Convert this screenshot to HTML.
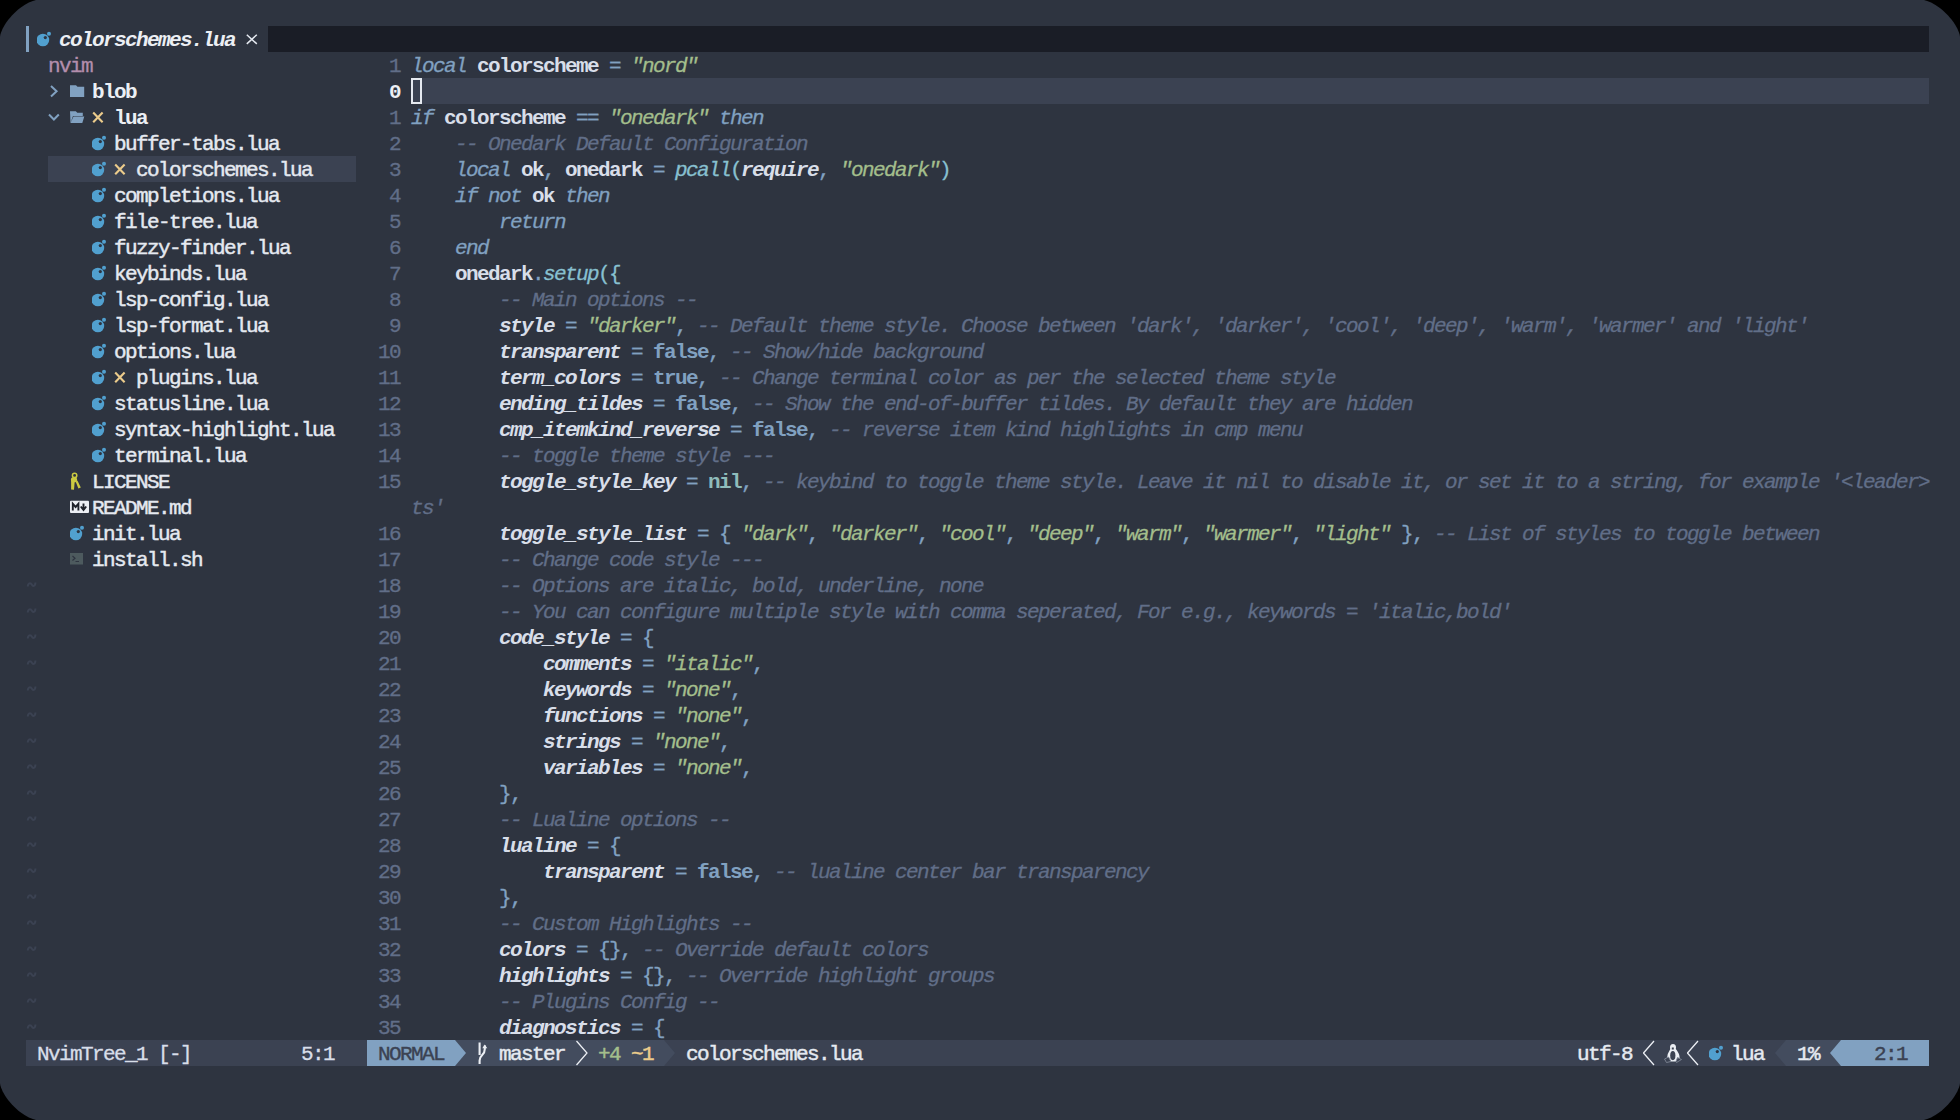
<!DOCTYPE html>
<html><head><meta charset="utf-8"><style>
html,body{margin:0;padding:0;background:#000;}
body{width:1960px;height:1120px;overflow:hidden;position:relative;}
.win{position:absolute;left:0;top:0;width:1960px;height:1120px;background:#2E3440;clip-path:polygon(1923.00px 0.00px,1923.97px 0.11px,1925.45px 0.42px,1927.19px 0.94px,1929.10px 1.67px,1931.15px 2.59px,1933.28px 3.71px,1935.47px 5.00px,1937.68px 6.46px,1939.90px 8.07px,1942.09px 9.83px,1944.23px 11.70px,1946.31px 13.69px,1948.30px 15.77px,1950.17px 17.91px,1951.93px 20.10px,1953.54px 22.32px,1955.00px 24.53px,1956.29px 26.72px,1957.41px 28.85px,1958.33px 30.90px,1959.06px 32.81px,1959.58px 34.55px,1959.89px 36.03px,1960.00px 37.00px,1960.00px 1083.00px,1959.89px 1083.97px,1959.58px 1085.45px,1959.06px 1087.19px,1958.33px 1089.10px,1957.41px 1091.15px,1956.29px 1093.28px,1955.00px 1095.47px,1953.54px 1097.68px,1951.93px 1099.90px,1950.17px 1102.09px,1948.30px 1104.23px,1946.31px 1106.31px,1944.23px 1108.30px,1942.09px 1110.17px,1939.90px 1111.93px,1937.68px 1113.54px,1935.47px 1115.00px,1933.28px 1116.29px,1931.15px 1117.41px,1929.10px 1118.33px,1927.19px 1119.06px,1925.45px 1119.58px,1923.97px 1119.89px,1923.00px 1120.00px,37.00px 1120.00px,36.03px 1119.89px,34.55px 1119.58px,32.81px 1119.06px,30.90px 1118.33px,28.85px 1117.41px,26.72px 1116.29px,24.53px 1115.00px,22.32px 1113.54px,20.10px 1111.93px,17.91px 1110.17px,15.77px 1108.30px,13.69px 1106.31px,11.70px 1104.23px,9.83px 1102.09px,8.07px 1099.90px,6.46px 1097.68px,5.00px 1095.47px,3.71px 1093.28px,2.59px 1091.15px,1.67px 1089.10px,0.94px 1087.19px,0.42px 1085.45px,0.11px 1083.97px,0.00px 1083.00px,0.00px 37.00px,0.11px 36.03px,0.42px 34.55px,0.94px 32.81px,1.67px 30.90px,2.59px 28.85px,3.71px 26.72px,5.00px 24.53px,6.46px 22.32px,8.07px 20.10px,9.83px 17.91px,11.70px 15.77px,13.69px 13.69px,15.77px 11.70px,17.91px 9.83px,20.10px 8.07px,22.32px 6.46px,24.53px 5.00px,26.72px 3.71px,28.85px 2.59px,30.90px 1.67px,32.81px 0.94px,34.55px 0.42px,36.03px 0.11px,37.00px 0.00px);overflow:hidden;}
.t{position:absolute;white-space:pre;font-family:"Liberation Mono",monospace;font-size:21px;letter-spacing:-1.6021px;line-height:26px;height:26px;color:#D8DEE9;}
.st{-webkit-text-stroke:0.3px currentColor}
.b{font-weight:bold}
.bi{font-weight:bold;font-style:italic}
.fg6{color:#ECEFF4}
.fn6{color:#E5E9F0;-webkit-text-stroke:0.45px #E5E9F0}
.purple{color:#B48EAD;-webkit-text-stroke:0.3px currentColor}
.tilde{color:#3B4252}
.kw{color:#81A1C1;font-style:italic;-webkit-text-stroke:0.3px currentColor}
.id{color:#D8DEE9;font-weight:bold}
.op{color:#81A1C1;-webkit-text-stroke:0.3px currentColor}
.str{color:#A3BE8C;font-style:italic;-webkit-text-stroke:0.3px currentColor}
.cmt{color:#616E88;font-style:italic;-webkit-text-stroke:0.3px currentColor}
.fn{color:#88C0D0;font-style:italic;-webkit-text-stroke:0.3px currentColor}
.req{color:#D8DEE9;font-weight:bold;font-style:italic}
.prop{color:#D8DEE9;font-weight:bold;font-style:italic}
.bool{color:#81A1C1;font-weight:bold}
.nil{color:#8FBCBB;font-weight:bold}
.pun{color:#81A1C1;-webkit-text-stroke:0.3px currentColor}
.par{color:#88C0D0;-webkit-text-stroke:0.3px currentColor}
.brc{color:#81A1C1;-webkit-text-stroke:0.3px currentColor}
.lnr{color:#616E88;-webkit-text-stroke:0.3px currentColor}
.lnrc{color:#ECEFF4;font-weight:bold}
.sl{color:#D8DEE9;-webkit-text-stroke:0.3px currentColor}
.slb{color:#E5E9F0;-webkit-text-stroke:0.45px #E5E9F0}
.slm{color:#3B4252;-webkit-text-stroke:0.4px #3B4252}
.add{color:#A3BE8C;-webkit-text-stroke:0.45px #A3BE8C}
.chg{color:#EBCB8B;-webkit-text-stroke:0.45px #EBCB8B}
</style></head>
<body><div class="win">
<div style="position:absolute;left:268px;top:26px;width:1661px;height:26px;background:#1A1D26;"></div>
<div style="position:absolute;left:26px;top:26px;width:3px;height:26px;background:#81A1C1;"></div>
<div style="position:absolute;left:411px;top:78px;width:1518px;height:26px;background:#3B4252;"></div>
<div style="position:absolute;left:48px;top:156px;width:308px;height:26px;background:#3B4252;"></div>
<div style="position:absolute;left:26px;top:1040px;width:341px;height:26px;background:#3B4252;"></div>
<div style="position:absolute;left:367px;top:1040px;width:1562px;height:26px;background:#3B4252;"></div>
<div style="position:absolute;left:367px;top:1040px;width:88px;height:26px;background:#81A1C1;"></div>
<svg style="position:absolute;left:455px;top:1040px;" width="11" height="26" viewBox="0 0 11 26"><polygon points="0,0 11,13 0,26" fill="#81A1C1"/></svg>
<div style="position:absolute;left:455px;top:1040px;width:209px;height:26px;background:#434C5E;"></div>
<svg style="position:absolute;left:455px;top:1040px;z-index:2" width="11" height="26" viewBox="0 0 11 26"><polygon points="0,0 11,13 0,26" fill="#81A1C1"/></svg>
<div style="position:absolute;left:455px;top:1040px;width:0px;height:0px;background:none;"></div>
<svg style="position:absolute;left:664px;top:1040px;" width="11" height="26" viewBox="0 0 11 26"><polygon points="0,0 11,13 0,26" fill="#434C5E"/></svg>
<svg style="position:absolute;left:1775px;top:1040px;" width="11" height="26" viewBox="0 0 11 26"><polygon points="11,0 0,13 11,26" fill="#434C5E"/></svg>
<div style="position:absolute;left:1786px;top:1040px;width:55px;height:26px;background:#434C5E;"></div>
<svg style="position:absolute;left:1830px;top:1040px;" width="11" height="26" viewBox="0 0 11 26"><polygon points="11,0 0,13 11,26" fill="#81A1C1"/></svg>
<div style="position:absolute;left:1841px;top:1040px;width:88px;height:26px;background:#81A1C1;"></div>
<svg style="position:absolute;left:37px;top:26px;" width="14" height="26" viewBox="0 0 14 26"><circle cx="5.9" cy="14" r="6.3" fill="#51A0CF"/><circle cx="8.3" cy="11.6" r="1.6" fill="#2E3440"/><circle cx="12" cy="7.8" r="2" fill="#51A0CF"/></svg>
<svg style="position:absolute;left:246px;top:26px;" width="12" height="26" viewBox="0 0 12 26"><path d="M0.8 8.7 L10.8 17.9 M10.8 8.7 L0.8 17.9" stroke="#E5E9F0" stroke-width="1.5" fill="none"/></svg>
<svg style="position:absolute;left:48px;top:78px;" width="11" height="26" viewBox="0 0 11 26"><path d="M3 8 L8.6 13.2 L3 18.4" stroke="#81A1C1" stroke-width="2" fill="none"/></svg>
<svg style="position:absolute;left:70px;top:78px;" width="16" height="26" viewBox="0 0 16 26"><path d="M0 7.2 H6 L7.5 8.8 H14.2 V19 H0 Z" fill="#81A1C1"/></svg>
<svg style="position:absolute;left:48px;top:104px;" width="12" height="26" viewBox="0 0 12 26"><path d="M1 10.5 L5.9 15.5 L10.8 10.5" stroke="#81A1C1" stroke-width="2" fill="none"/></svg>
<svg style="position:absolute;left:70px;top:104px;" width="16" height="26" viewBox="0 0 16 26"><path d="M0 7.3 H5.8 L7.3 8.8 H12.8 V12 H3 L0.5 19 Z M3.5 12.6 H14.3 L12.3 19.1 H0.5 Z" fill="#81A1C1"/></svg>
<svg style="position:absolute;left:92px;top:104px;" width="12" height="26" viewBox="0 0 12 26"><path d="M1.2 8.4 L10.6 18.2 M10.6 8.4 L1.2 18.2" stroke="#EBCB8B" stroke-width="2.1" fill="none"/></svg>
<svg style="position:absolute;left:92px;top:130px;" width="14" height="26" viewBox="0 0 14 26"><circle cx="5.9" cy="14" r="6.3" fill="#51A0CF"/><circle cx="8.3" cy="11.6" r="1.6" fill="#2E3440"/><circle cx="12" cy="7.8" r="2" fill="#51A0CF"/></svg>
<svg style="position:absolute;left:92px;top:156px;" width="14" height="26" viewBox="0 0 14 26"><circle cx="5.9" cy="14" r="6.3" fill="#51A0CF"/><circle cx="8.3" cy="11.6" r="1.6" fill="#2E3440"/><circle cx="12" cy="7.8" r="2" fill="#51A0CF"/></svg>
<svg style="position:absolute;left:92px;top:182px;" width="14" height="26" viewBox="0 0 14 26"><circle cx="5.9" cy="14" r="6.3" fill="#51A0CF"/><circle cx="8.3" cy="11.6" r="1.6" fill="#2E3440"/><circle cx="12" cy="7.8" r="2" fill="#51A0CF"/></svg>
<svg style="position:absolute;left:92px;top:208px;" width="14" height="26" viewBox="0 0 14 26"><circle cx="5.9" cy="14" r="6.3" fill="#51A0CF"/><circle cx="8.3" cy="11.6" r="1.6" fill="#2E3440"/><circle cx="12" cy="7.8" r="2" fill="#51A0CF"/></svg>
<svg style="position:absolute;left:92px;top:234px;" width="14" height="26" viewBox="0 0 14 26"><circle cx="5.9" cy="14" r="6.3" fill="#51A0CF"/><circle cx="8.3" cy="11.6" r="1.6" fill="#2E3440"/><circle cx="12" cy="7.8" r="2" fill="#51A0CF"/></svg>
<svg style="position:absolute;left:92px;top:260px;" width="14" height="26" viewBox="0 0 14 26"><circle cx="5.9" cy="14" r="6.3" fill="#51A0CF"/><circle cx="8.3" cy="11.6" r="1.6" fill="#2E3440"/><circle cx="12" cy="7.8" r="2" fill="#51A0CF"/></svg>
<svg style="position:absolute;left:92px;top:286px;" width="14" height="26" viewBox="0 0 14 26"><circle cx="5.9" cy="14" r="6.3" fill="#51A0CF"/><circle cx="8.3" cy="11.6" r="1.6" fill="#2E3440"/><circle cx="12" cy="7.8" r="2" fill="#51A0CF"/></svg>
<svg style="position:absolute;left:92px;top:312px;" width="14" height="26" viewBox="0 0 14 26"><circle cx="5.9" cy="14" r="6.3" fill="#51A0CF"/><circle cx="8.3" cy="11.6" r="1.6" fill="#2E3440"/><circle cx="12" cy="7.8" r="2" fill="#51A0CF"/></svg>
<svg style="position:absolute;left:92px;top:338px;" width="14" height="26" viewBox="0 0 14 26"><circle cx="5.9" cy="14" r="6.3" fill="#51A0CF"/><circle cx="8.3" cy="11.6" r="1.6" fill="#2E3440"/><circle cx="12" cy="7.8" r="2" fill="#51A0CF"/></svg>
<svg style="position:absolute;left:92px;top:364px;" width="14" height="26" viewBox="0 0 14 26"><circle cx="5.9" cy="14" r="6.3" fill="#51A0CF"/><circle cx="8.3" cy="11.6" r="1.6" fill="#2E3440"/><circle cx="12" cy="7.8" r="2" fill="#51A0CF"/></svg>
<svg style="position:absolute;left:92px;top:390px;" width="14" height="26" viewBox="0 0 14 26"><circle cx="5.9" cy="14" r="6.3" fill="#51A0CF"/><circle cx="8.3" cy="11.6" r="1.6" fill="#2E3440"/><circle cx="12" cy="7.8" r="2" fill="#51A0CF"/></svg>
<svg style="position:absolute;left:92px;top:416px;" width="14" height="26" viewBox="0 0 14 26"><circle cx="5.9" cy="14" r="6.3" fill="#51A0CF"/><circle cx="8.3" cy="11.6" r="1.6" fill="#2E3440"/><circle cx="12" cy="7.8" r="2" fill="#51A0CF"/></svg>
<svg style="position:absolute;left:92px;top:442px;" width="14" height="26" viewBox="0 0 14 26"><circle cx="5.9" cy="14" r="6.3" fill="#51A0CF"/><circle cx="8.3" cy="11.6" r="1.6" fill="#2E3440"/><circle cx="12" cy="7.8" r="2" fill="#51A0CF"/></svg>
<svg style="position:absolute;left:114px;top:156px;" width="12" height="26" viewBox="0 0 12 26"><path d="M1.2 8.4 L10.6 18.2 M10.6 8.4 L1.2 18.2" stroke="#EBCB8B" stroke-width="2.1" fill="none"/></svg>
<svg style="position:absolute;left:114px;top:364px;" width="12" height="26" viewBox="0 0 12 26"><path d="M1.2 8.4 L10.6 18.2 M10.6 8.4 L1.2 18.2" stroke="#EBCB8B" stroke-width="2.1" fill="none"/></svg>
<svg style="position:absolute;left:70px;top:468px;" width="12" height="26" viewBox="0 0 12 26"><g fill="#CBCB41"><circle cx="4.6" cy="7.4" r="2.2" fill="none" stroke="#CBCB41" stroke-width="1.5"/><ellipse cx="4" cy="11.7" rx="3.1" ry="2.6"/><path d="M1.1 12.5 V21.4 L4 21.8 L4.7 13.5 Z"/><path d="M5.6 13.6 L8.4 20.6 L10.8 19.5 L7.4 12.4 Z"/></g></svg>
<svg style="position:absolute;left:70px;top:494px;" width="22" height="26" viewBox="0 0 22 26"><rect x="0" y="6.8" width="19" height="12.2" rx="1" fill="#ECEFF4"/><path d="M2.8 16.5 V9.8 L5.6 13 L8.4 9.8 V16.5" stroke="#1E222A" stroke-width="1.9" fill="none"/><path d="M13.5 9.5 V15 M10.8 12.5 L13.5 16 L16.2 12.5" stroke="#1E222A" stroke-width="1.9" fill="none"/></svg>
<svg style="position:absolute;left:70px;top:520px;" width="14" height="26" viewBox="0 0 14 26"><circle cx="5.9" cy="14" r="6.3" fill="#51A0CF"/><circle cx="8.3" cy="11.6" r="1.6" fill="#2E3440"/><circle cx="12" cy="7.8" r="2" fill="#51A0CF"/></svg>
<svg style="position:absolute;left:70px;top:546px;top:552px" width="14" height="26" viewBox="0 0 14 26"><rect x="0" y="1" width="13" height="11.5" fill="#4D5A5E"/><path d="M2.5 4 L5 6.2 L2.5 8.5 M5.5 9.5 H9" stroke="#2E3440" stroke-width="1.2" fill="none"/></svg>
<svg style="position:absolute;left:477px;top:1040px;" width="12" height="26" viewBox="0 0 12 26"><path d="M2.6 2.5 V15 M2.6 24 V20.5 Q2.6 17.5 5.2 15 Q7.8 12.5 7.8 9 V5.5" stroke="#ECEFF4" stroke-width="2.1" fill="none"/><path d="M5.3 8.2 L7.8 4.6 L10.3 8.2 Z" fill="#ECEFF4"/></svg>
<svg style="position:absolute;left:576px;top:1040px;" width="12" height="26" viewBox="0 0 12 26"><path d="M0.5 1 L11 13 L0.5 25" stroke="#ECEFF4" stroke-width="1.25" fill="none"/></svg>
<svg style="position:absolute;left:1643px;top:1040px;" width="12" height="26" viewBox="0 0 12 26"><path d="M11 1 L0.5 13 L11 25" stroke="#ECEFF4" stroke-width="1.25" fill="none"/></svg>
<svg style="position:absolute;left:1687px;top:1040px;" width="12" height="26" viewBox="0 0 12 26"><path d="M11 1 L0.5 13 L11 25" stroke="#ECEFF4" stroke-width="1.25" fill="none"/></svg>
<svg style="position:absolute;left:1660px;top:1040px;" width="26" height="26" viewBox="0 0 26 26"><ellipse cx="13" cy="7.6" rx="3" ry="3.6" fill="#ECEFF4"/><path d="M10.3 9 Q7 14 7 18.5 L10 21.6 H16 L19.6 18 Q19.6 13.5 15.8 9 Z" fill="#ECEFF4"/><ellipse cx="12.8" cy="15.6" rx="2.6" ry="4.6" fill="#3B4252"/><rect x="11.8" y="7.5" width="2" height="2" fill="#3B4252"/><path d="M4.5 19 L8.5 17 L11 21.5 L6.5 22.5 Z M16 21.5 L17.5 17.5 L21.5 19.5 L16.5 22.5 Z" fill="#3B4252" stroke="#7F8795" stroke-width="0.9"/></svg>
<svg style="position:absolute;left:1709px;top:1040px;" width="14" height="26" viewBox="0 0 14 26"><circle cx="5.9" cy="14" r="6.3" fill="#51A0CF"/><circle cx="8.3" cy="11.6" r="1.6" fill="#2E3440"/><circle cx="12" cy="7.8" r="2" fill="#51A0CF"/></svg>
<span class="t bi fg6" style="left:59px;top:27.5px">colorschemes.lua</span>
<span class="t purple" style="left:48px;top:53.5px">nvim</span>
<span class="t b fg6" style="left:92px;top:79.5px">blob</span>
<span class="t b fg6" style="left:114px;top:105.5px">lua</span>
<span class="t fn6" style="left:114px;top:131.5px">buffer-tabs.lua</span>
<span class="t fn6" style="left:136px;top:157.5px">colorschemes.lua</span>
<span class="t fn6" style="left:114px;top:183.5px">completions.lua</span>
<span class="t fn6" style="left:114px;top:209.5px">file-tree.lua</span>
<span class="t fn6" style="left:114px;top:235.5px">fuzzy-finder.lua</span>
<span class="t fn6" style="left:114px;top:261.5px">keybinds.lua</span>
<span class="t fn6" style="left:114px;top:287.5px">lsp-config.lua</span>
<span class="t fn6" style="left:114px;top:313.5px">lsp-format.lua</span>
<span class="t fn6" style="left:114px;top:339.5px">options.lua</span>
<span class="t fn6" style="left:136px;top:365.5px">plugins.lua</span>
<span class="t fn6" style="left:114px;top:391.5px">statusline.lua</span>
<span class="t fn6" style="left:114px;top:417.5px">syntax-highlight.lua</span>
<span class="t fn6" style="left:114px;top:443.5px">terminal.lua</span>
<span class="t fn6" style="left:92px;top:469.5px">LICENSE</span>
<span class="t fn6" style="left:92px;top:495.5px">README.md</span>
<span class="t fn6" style="left:92px;top:521.5px">init.lua</span>
<span class="t fn6" style="left:92px;top:547.5px">install.sh</span>
<svg style="position:absolute;left:26px;top:572px;" width="11" height="26" viewBox="0 0 11 26"><path d="M1.8 14.6 C1.8 10.6 4.8 10.6 5.8 12.6 C6.8 14.6 9.4 14.6 9.4 10.6" stroke="#3B4252" stroke-width="2" fill="none"/></svg>
<svg style="position:absolute;left:26px;top:598px;" width="11" height="26" viewBox="0 0 11 26"><path d="M1.8 14.6 C1.8 10.6 4.8 10.6 5.8 12.6 C6.8 14.6 9.4 14.6 9.4 10.6" stroke="#3B4252" stroke-width="2" fill="none"/></svg>
<svg style="position:absolute;left:26px;top:624px;" width="11" height="26" viewBox="0 0 11 26"><path d="M1.8 14.6 C1.8 10.6 4.8 10.6 5.8 12.6 C6.8 14.6 9.4 14.6 9.4 10.6" stroke="#3B4252" stroke-width="2" fill="none"/></svg>
<svg style="position:absolute;left:26px;top:650px;" width="11" height="26" viewBox="0 0 11 26"><path d="M1.8 14.6 C1.8 10.6 4.8 10.6 5.8 12.6 C6.8 14.6 9.4 14.6 9.4 10.6" stroke="#3B4252" stroke-width="2" fill="none"/></svg>
<svg style="position:absolute;left:26px;top:676px;" width="11" height="26" viewBox="0 0 11 26"><path d="M1.8 14.6 C1.8 10.6 4.8 10.6 5.8 12.6 C6.8 14.6 9.4 14.6 9.4 10.6" stroke="#3B4252" stroke-width="2" fill="none"/></svg>
<svg style="position:absolute;left:26px;top:702px;" width="11" height="26" viewBox="0 0 11 26"><path d="M1.8 14.6 C1.8 10.6 4.8 10.6 5.8 12.6 C6.8 14.6 9.4 14.6 9.4 10.6" stroke="#3B4252" stroke-width="2" fill="none"/></svg>
<svg style="position:absolute;left:26px;top:728px;" width="11" height="26" viewBox="0 0 11 26"><path d="M1.8 14.6 C1.8 10.6 4.8 10.6 5.8 12.6 C6.8 14.6 9.4 14.6 9.4 10.6" stroke="#3B4252" stroke-width="2" fill="none"/></svg>
<svg style="position:absolute;left:26px;top:754px;" width="11" height="26" viewBox="0 0 11 26"><path d="M1.8 14.6 C1.8 10.6 4.8 10.6 5.8 12.6 C6.8 14.6 9.4 14.6 9.4 10.6" stroke="#3B4252" stroke-width="2" fill="none"/></svg>
<svg style="position:absolute;left:26px;top:780px;" width="11" height="26" viewBox="0 0 11 26"><path d="M1.8 14.6 C1.8 10.6 4.8 10.6 5.8 12.6 C6.8 14.6 9.4 14.6 9.4 10.6" stroke="#3B4252" stroke-width="2" fill="none"/></svg>
<svg style="position:absolute;left:26px;top:806px;" width="11" height="26" viewBox="0 0 11 26"><path d="M1.8 14.6 C1.8 10.6 4.8 10.6 5.8 12.6 C6.8 14.6 9.4 14.6 9.4 10.6" stroke="#3B4252" stroke-width="2" fill="none"/></svg>
<svg style="position:absolute;left:26px;top:832px;" width="11" height="26" viewBox="0 0 11 26"><path d="M1.8 14.6 C1.8 10.6 4.8 10.6 5.8 12.6 C6.8 14.6 9.4 14.6 9.4 10.6" stroke="#3B4252" stroke-width="2" fill="none"/></svg>
<svg style="position:absolute;left:26px;top:858px;" width="11" height="26" viewBox="0 0 11 26"><path d="M1.8 14.6 C1.8 10.6 4.8 10.6 5.8 12.6 C6.8 14.6 9.4 14.6 9.4 10.6" stroke="#3B4252" stroke-width="2" fill="none"/></svg>
<svg style="position:absolute;left:26px;top:884px;" width="11" height="26" viewBox="0 0 11 26"><path d="M1.8 14.6 C1.8 10.6 4.8 10.6 5.8 12.6 C6.8 14.6 9.4 14.6 9.4 10.6" stroke="#3B4252" stroke-width="2" fill="none"/></svg>
<svg style="position:absolute;left:26px;top:910px;" width="11" height="26" viewBox="0 0 11 26"><path d="M1.8 14.6 C1.8 10.6 4.8 10.6 5.8 12.6 C6.8 14.6 9.4 14.6 9.4 10.6" stroke="#3B4252" stroke-width="2" fill="none"/></svg>
<svg style="position:absolute;left:26px;top:936px;" width="11" height="26" viewBox="0 0 11 26"><path d="M1.8 14.6 C1.8 10.6 4.8 10.6 5.8 12.6 C6.8 14.6 9.4 14.6 9.4 10.6" stroke="#3B4252" stroke-width="2" fill="none"/></svg>
<svg style="position:absolute;left:26px;top:962px;" width="11" height="26" viewBox="0 0 11 26"><path d="M1.8 14.6 C1.8 10.6 4.8 10.6 5.8 12.6 C6.8 14.6 9.4 14.6 9.4 10.6" stroke="#3B4252" stroke-width="2" fill="none"/></svg>
<svg style="position:absolute;left:26px;top:988px;" width="11" height="26" viewBox="0 0 11 26"><path d="M1.8 14.6 C1.8 10.6 4.8 10.6 5.8 12.6 C6.8 14.6 9.4 14.6 9.4 10.6" stroke="#3B4252" stroke-width="2" fill="none"/></svg>
<svg style="position:absolute;left:26px;top:1014px;" width="11" height="26" viewBox="0 0 11 26"><path d="M1.8 14.6 C1.8 10.6 4.8 10.6 5.8 12.6 C6.8 14.6 9.4 14.6 9.4 10.6" stroke="#3B4252" stroke-width="2" fill="none"/></svg>
<span class="t lnr" style="left:367px;top:53.5px">  1</span>
<span class="t kw" style="left:411px;top:53.5px">local</span>
<span class="t id" style="left:477px;top:53.5px">colorscheme</span>
<span class="t op" style="left:609px;top:53.5px">=</span>
<span class="t str" style="left:631px;top:53.5px">&quot;nord&quot;</span>
<span class="t lnrc" style="left:367px;top:79.5px">  0</span>
<span class="t lnr" style="left:367px;top:105.5px">  1</span>
<span class="t kw" style="left:411px;top:105.5px">if</span>
<span class="t id" style="left:444px;top:105.5px">colorscheme</span>
<span class="t op" style="left:576px;top:105.5px">==</span>
<span class="t str" style="left:609px;top:105.5px">&quot;onedark&quot;</span>
<span class="t kw" style="left:719px;top:105.5px">then</span>
<span class="t lnr" style="left:367px;top:131.5px">  2</span>
<span class="t cmt" style="left:455px;top:131.5px">-- Onedark Default Configuration</span>
<span class="t lnr" style="left:367px;top:157.5px">  3</span>
<span class="t kw" style="left:455px;top:157.5px">local</span>
<span class="t id" style="left:521px;top:157.5px">ok</span>
<span class="t pun" style="left:543px;top:157.5px">,</span>
<span class="t id" style="left:565px;top:157.5px">onedark</span>
<span class="t op" style="left:653px;top:157.5px">=</span>
<span class="t fn" style="left:675px;top:157.5px">pcall</span>
<span class="t par" style="left:730px;top:157.5px">(</span>
<span class="t req" style="left:741px;top:157.5px">require</span>
<span class="t pun" style="left:818px;top:157.5px">,</span>
<span class="t str" style="left:840px;top:157.5px">&quot;onedark&quot;</span>
<span class="t par" style="left:939px;top:157.5px">)</span>
<span class="t lnr" style="left:367px;top:183.5px">  4</span>
<span class="t kw" style="left:455px;top:183.5px">if</span>
<span class="t kw" style="left:488px;top:183.5px">not</span>
<span class="t id" style="left:532px;top:183.5px">ok</span>
<span class="t kw" style="left:565px;top:183.5px">then</span>
<span class="t lnr" style="left:367px;top:209.5px">  5</span>
<span class="t kw" style="left:499px;top:209.5px">return</span>
<span class="t lnr" style="left:367px;top:235.5px">  6</span>
<span class="t kw" style="left:455px;top:235.5px">end</span>
<span class="t lnr" style="left:367px;top:261.5px">  7</span>
<span class="t id" style="left:455px;top:261.5px">onedark</span>
<span class="t pun" style="left:532px;top:261.5px">.</span>
<span class="t fn" style="left:543px;top:261.5px">setup</span>
<span class="t par" style="left:598px;top:261.5px">(</span>
<span class="t par" style="left:609px;top:261.5px">{</span>
<span class="t lnr" style="left:367px;top:287.5px">  8</span>
<span class="t cmt" style="left:499px;top:287.5px">-- Main options --</span>
<span class="t lnr" style="left:367px;top:313.5px">  9</span>
<span class="t prop" style="left:499px;top:313.5px">style</span>
<span class="t op" style="left:565px;top:313.5px">=</span>
<span class="t str" style="left:587px;top:313.5px">&quot;darker&quot;</span>
<span class="t pun" style="left:675px;top:313.5px">,</span>
<span class="t cmt" style="left:697px;top:313.5px">-- Default theme style. Choose between &#x27;dark&#x27;, &#x27;darker&#x27;, &#x27;cool&#x27;, &#x27;deep&#x27;, &#x27;warm&#x27;, &#x27;warmer&#x27; and &#x27;light&#x27;</span>
<span class="t lnr" style="left:367px;top:339.5px"> 10</span>
<span class="t prop" style="left:499px;top:339.5px">transparent</span>
<span class="t op" style="left:631px;top:339.5px">=</span>
<span class="t bool" style="left:653px;top:339.5px">false</span>
<span class="t pun" style="left:708px;top:339.5px">,</span>
<span class="t cmt" style="left:730px;top:339.5px">-- Show/hide background</span>
<span class="t lnr" style="left:367px;top:365.5px"> 11</span>
<span class="t prop" style="left:499px;top:365.5px">term_colors</span>
<span class="t op" style="left:631px;top:365.5px">=</span>
<span class="t bool" style="left:653px;top:365.5px">true</span>
<span class="t pun" style="left:697px;top:365.5px">,</span>
<span class="t cmt" style="left:719px;top:365.5px">-- Change terminal color as per the selected theme style</span>
<span class="t lnr" style="left:367px;top:391.5px"> 12</span>
<span class="t prop" style="left:499px;top:391.5px">ending_tildes</span>
<span class="t op" style="left:653px;top:391.5px">=</span>
<span class="t bool" style="left:675px;top:391.5px">false</span>
<span class="t pun" style="left:730px;top:391.5px">,</span>
<span class="t cmt" style="left:752px;top:391.5px">-- Show the end-of-buffer tildes. By default they are hidden</span>
<span class="t lnr" style="left:367px;top:417.5px"> 13</span>
<span class="t prop" style="left:499px;top:417.5px">cmp_itemkind_reverse</span>
<span class="t op" style="left:730px;top:417.5px">=</span>
<span class="t bool" style="left:752px;top:417.5px">false</span>
<span class="t pun" style="left:807px;top:417.5px">,</span>
<span class="t cmt" style="left:829px;top:417.5px">-- reverse item kind highlights in cmp menu</span>
<span class="t lnr" style="left:367px;top:443.5px"> 14</span>
<span class="t cmt" style="left:499px;top:443.5px">-- toggle theme style ---</span>
<span class="t lnr" style="left:367px;top:469.5px"> 15</span>
<span class="t prop" style="left:499px;top:469.5px">toggle_style_key</span>
<span class="t op" style="left:686px;top:469.5px">=</span>
<span class="t nil" style="left:708px;top:469.5px">nil</span>
<span class="t pun" style="left:741px;top:469.5px">,</span>
<span class="t cmt" style="left:763px;top:469.5px">-- keybind to toggle theme style. Leave it nil to disable it, or set it to a string, for example &#x27;&lt;leader&gt;</span>
<span class="t cmt" style="left:411px;top:495.5px">ts&#x27;</span>
<span class="t lnr" style="left:367px;top:521.5px"> 16</span>
<span class="t prop" style="left:499px;top:521.5px">toggle_style_list</span>
<span class="t op" style="left:697px;top:521.5px">=</span>
<span class="t brc" style="left:719px;top:521.5px">{</span>
<span class="t str" style="left:741px;top:521.5px">&quot;dark&quot;</span>
<span class="t pun" style="left:807px;top:521.5px">,</span>
<span class="t str" style="left:829px;top:521.5px">&quot;darker&quot;</span>
<span class="t pun" style="left:917px;top:521.5px">,</span>
<span class="t str" style="left:939px;top:521.5px">&quot;cool&quot;</span>
<span class="t pun" style="left:1005px;top:521.5px">,</span>
<span class="t str" style="left:1027px;top:521.5px">&quot;deep&quot;</span>
<span class="t pun" style="left:1093px;top:521.5px">,</span>
<span class="t str" style="left:1115px;top:521.5px">&quot;warm&quot;</span>
<span class="t pun" style="left:1181px;top:521.5px">,</span>
<span class="t str" style="left:1203px;top:521.5px">&quot;warmer&quot;</span>
<span class="t pun" style="left:1291px;top:521.5px">,</span>
<span class="t str" style="left:1313px;top:521.5px">&quot;light&quot;</span>
<span class="t brc" style="left:1401px;top:521.5px">}</span>
<span class="t pun" style="left:1412px;top:521.5px">,</span>
<span class="t cmt" style="left:1434px;top:521.5px">-- List of styles to toggle between</span>
<span class="t lnr" style="left:367px;top:547.5px"> 17</span>
<span class="t cmt" style="left:499px;top:547.5px">-- Change code style ---</span>
<span class="t lnr" style="left:367px;top:573.5px"> 18</span>
<span class="t cmt" style="left:499px;top:573.5px">-- Options are italic, bold, underline, none</span>
<span class="t lnr" style="left:367px;top:599.5px"> 19</span>
<span class="t cmt" style="left:499px;top:599.5px">-- You can configure multiple style with comma seperated, For e.g., keywords = &#x27;italic,bold&#x27;</span>
<span class="t lnr" style="left:367px;top:625.5px"> 20</span>
<span class="t prop" style="left:499px;top:625.5px">code_style</span>
<span class="t op" style="left:620px;top:625.5px">=</span>
<span class="t brc" style="left:642px;top:625.5px">{</span>
<span class="t lnr" style="left:367px;top:651.5px"> 21</span>
<span class="t prop" style="left:543px;top:651.5px">comments</span>
<span class="t op" style="left:642px;top:651.5px">=</span>
<span class="t str" style="left:664px;top:651.5px">&quot;italic&quot;</span>
<span class="t pun" style="left:752px;top:651.5px">,</span>
<span class="t lnr" style="left:367px;top:677.5px"> 22</span>
<span class="t prop" style="left:543px;top:677.5px">keywords</span>
<span class="t op" style="left:642px;top:677.5px">=</span>
<span class="t str" style="left:664px;top:677.5px">&quot;none&quot;</span>
<span class="t pun" style="left:730px;top:677.5px">,</span>
<span class="t lnr" style="left:367px;top:703.5px"> 23</span>
<span class="t prop" style="left:543px;top:703.5px">functions</span>
<span class="t op" style="left:653px;top:703.5px">=</span>
<span class="t str" style="left:675px;top:703.5px">&quot;none&quot;</span>
<span class="t pun" style="left:741px;top:703.5px">,</span>
<span class="t lnr" style="left:367px;top:729.5px"> 24</span>
<span class="t prop" style="left:543px;top:729.5px">strings</span>
<span class="t op" style="left:631px;top:729.5px">=</span>
<span class="t str" style="left:653px;top:729.5px">&quot;none&quot;</span>
<span class="t pun" style="left:719px;top:729.5px">,</span>
<span class="t lnr" style="left:367px;top:755.5px"> 25</span>
<span class="t prop" style="left:543px;top:755.5px">variables</span>
<span class="t op" style="left:653px;top:755.5px">=</span>
<span class="t str" style="left:675px;top:755.5px">&quot;none&quot;</span>
<span class="t pun" style="left:741px;top:755.5px">,</span>
<span class="t lnr" style="left:367px;top:781.5px"> 26</span>
<span class="t brc" style="left:499px;top:781.5px">}</span>
<span class="t pun" style="left:510px;top:781.5px">,</span>
<span class="t lnr" style="left:367px;top:807.5px"> 27</span>
<span class="t cmt" style="left:499px;top:807.5px">-- Lualine options --</span>
<span class="t lnr" style="left:367px;top:833.5px"> 28</span>
<span class="t prop" style="left:499px;top:833.5px">lualine</span>
<span class="t op" style="left:587px;top:833.5px">=</span>
<span class="t brc" style="left:609px;top:833.5px">{</span>
<span class="t lnr" style="left:367px;top:859.5px"> 29</span>
<span class="t prop" style="left:543px;top:859.5px">transparent</span>
<span class="t op" style="left:675px;top:859.5px">=</span>
<span class="t bool" style="left:697px;top:859.5px">false</span>
<span class="t pun" style="left:752px;top:859.5px">,</span>
<span class="t cmt" style="left:774px;top:859.5px">-- lualine center bar transparency</span>
<span class="t lnr" style="left:367px;top:885.5px"> 30</span>
<span class="t brc" style="left:499px;top:885.5px">}</span>
<span class="t pun" style="left:510px;top:885.5px">,</span>
<span class="t lnr" style="left:367px;top:911.5px"> 31</span>
<span class="t cmt" style="left:499px;top:911.5px">-- Custom Highlights --</span>
<span class="t lnr" style="left:367px;top:937.5px"> 32</span>
<span class="t prop" style="left:499px;top:937.5px">colors</span>
<span class="t op" style="left:576px;top:937.5px">=</span>
<span class="t brc" style="left:598px;top:937.5px">{</span>
<span class="t brc" style="left:609px;top:937.5px">}</span>
<span class="t pun" style="left:620px;top:937.5px">,</span>
<span class="t cmt" style="left:642px;top:937.5px">-- Override default colors</span>
<span class="t lnr" style="left:367px;top:963.5px"> 33</span>
<span class="t prop" style="left:499px;top:963.5px">highlights</span>
<span class="t op" style="left:620px;top:963.5px">=</span>
<span class="t brc" style="left:642px;top:963.5px">{</span>
<span class="t brc" style="left:653px;top:963.5px">}</span>
<span class="t pun" style="left:664px;top:963.5px">,</span>
<span class="t cmt" style="left:686px;top:963.5px">-- Override highlight groups</span>
<span class="t lnr" style="left:367px;top:989.5px"> 34</span>
<span class="t cmt" style="left:499px;top:989.5px">-- Plugins Config --</span>
<span class="t lnr" style="left:367px;top:1015.5px"> 35</span>
<span class="t prop" style="left:499px;top:1015.5px">diagnostics</span>
<span class="t op" style="left:631px;top:1015.5px">=</span>
<span class="t brc" style="left:653px;top:1015.5px">{</span>
<div style="position:absolute;left:411px;top:78px;width:7px;height:22px;background:transparent;border:2px solid #E5E9F0;box-sizing:content-box;width:7px;height:22px"></div>
<span class="t sl" style="left:37px;top:1041.5px">NvimTree_1 [-]</span>
<span class="t sl" style="left:301px;top:1041.5px">5:1</span>
<span class="t slm" style="left:378px;top:1041.5px">NORMAL</span>
<span class="t slb" style="left:499px;top:1041.5px">master</span>
<span class="t add" style="left:598px;top:1041.5px">+4</span>
<span class="t chg" style="left:631px;top:1041.5px">~1</span>
<span class="t slb" style="left:686px;top:1041.5px">colorschemes.lua</span>
<span class="t slb" style="left:1577px;top:1041.5px">utf-8</span>
<span class="t slb" style="left:1731px;top:1041.5px">lua</span>
<span class="t slb" style="left:1797px;top:1041.5px">1%</span>
<span class="t slm" style="left:1874px;top:1041.5px">2:1</span>
</div></body></html>
